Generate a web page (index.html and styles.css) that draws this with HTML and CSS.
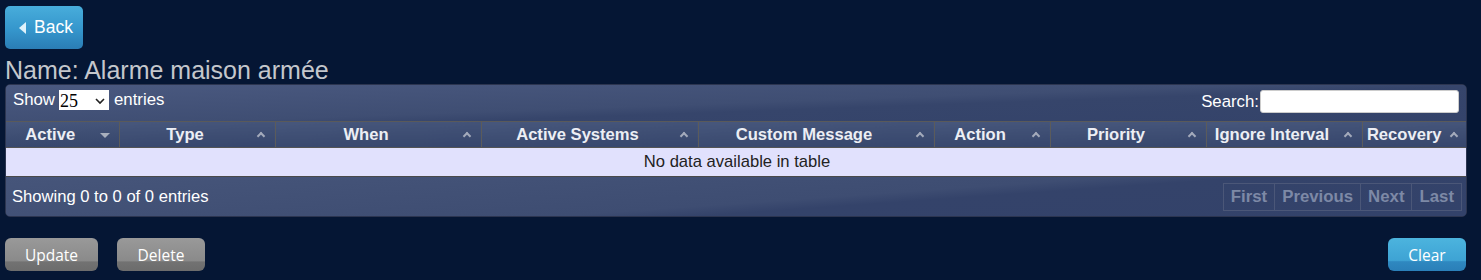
FILE: index.html
```html
<!DOCTYPE html>
<html>
<head>
<meta charset="utf-8">
<link rel="stylesheet" href="styles.css">
</head>
<body>
<div class="page">
  <button class="btn-back"><svg class="tri" width="8" height="12" viewBox="0 0 8 12"><path d="M7 0 L0 6 L7 12 Z" fill="#dff2fb"/></svg>Back</button>
  <h1 class="title">Name: Alarme maison armée</h1>
  <div class="panel">
    <div class="toolbar">
      <label class="show">Show <span class="select">25<svg width="10" height="7" viewBox="0 0 10 7"><path d="M1 1 L5 5 L9 1" fill="none" stroke="#222" stroke-width="1.6"/></svg></span> entries</label>
      <label class="search">Search:<span class="input"></span></label>
    </div>
    <table class="grid">
      <colgroup>
        <col style="width:113px"><col style="width:156px"><col style="width:206px"><col style="width:217px"><col style="width:236px"><col style="width:116px"><col style="width:156px"><col style="width:156px"><col style="width:106px">
      </colgroup>
      <thead>
        <tr>
          <th><span>Active</span><i class="sort down"></i></th>
          <th><span>Type</span><i class="sort"></i></th>
          <th><span>When</span><i class="sort"></i></th>
          <th><span>Active Systems</span><i class="sort"></i></th>
          <th><span>Custom Message</span><i class="sort"></i></th>
          <th><span>Action</span><i class="sort"></i></th>
          <th><span>Priority</span><i class="sort"></i></th>
          <th><span>Ignore Interval</span><i class="sort"></i></th>
          <th><span>Recovery</span><i class="sort"></i></th>
        </tr>
      </thead>
      <tbody>
        <tr><td colspan="9">No data available in table</td></tr>
      </tbody>
    </table>
    <div class="footer">
      <span class="info">Showing 0 to 0 of 0 entries</span>
      <div class="pager"><span>First</span><span>Previous</span><span>Next</span><span>Last</span></div>
    </div>
  </div>
  <div class="actions">
    <div class="left">
      <button class="btn grey">Update</button>
      <button class="btn grey">Delete</button>
    </div>
    <button class="btn blue">Clear</button>
  </div>
</div>
</body>
</html>
```

FILE: styles.css
```css
html, body {
  margin: 0;
  padding: 0;
  background: #051634;
  font-family: "Liberation Sans", Arial, sans-serif;
}
.page {
  padding: 6px 14px 0 5px;
  width: 1462px;
}
.btn-back {
  display: flex;
  align-items: center;
  gap: 7px;
  width: 78px;
  height: 43px;
  padding: 0 0 0 14px;
  border: none;
  border-radius: 5px;
  background: linear-gradient(#48addb, #3596cc 55%, #2a7db5);
  color: #fff;
  font-family: "Liberation Sans", Arial, sans-serif;
  font-size: 17.5px;
}
.tri { margin-top: 1px; }
.title {
  margin: 7px 0 0 0;
  height: 28px;
  font-size: 25px;
  font-weight: normal;
  color: #c4c7cc;
  line-height: 28px;
  white-space: nowrap;
}
.panel {
  margin-top: 0;
  border: 1px solid #2c3550;
  border-radius: 5px;
  overflow: hidden;
  background: linear-gradient(175deg, #46557a 0%, #3d4c71 45%, #33426a 55%, #304066 100%);
}
.toolbar {
  height: 36px;
  display: flex;
  justify-content: space-between;
  align-items: flex-start;
  padding: 0 7px;
  color: #fff;
  font-size: 16.8px;
  background: linear-gradient(178deg, #4a5980 0%, #3f4e73 50%, #36456b 60%, #34436a 100%);
  border-bottom: 1px solid #5a5a5a;
}
.show {
  display: flex;
  align-items: center;
  margin-top: 5px;
}
.select {
  display: inline-flex;
  align-items: center;
  justify-content: space-between;
  width: 50px;
  height: 20px;
  margin: 0 5px 0 4px;
  padding: 2px 4px 0 1px;
  box-sizing: border-box;
  background: #fff;
  color: #000;
  font-family: "Liberation Serif", "Times New Roman", serif;
  font-size: 18px;
  line-height: 22px;
}
.search {
  display: flex;
  align-items: center;
  margin-top: 5px;
}
.input {
  display: inline-block;
  width: 199px;
  height: 23px;
  box-sizing: border-box;
  background: #fff;
  border: 1px solid #ccc;
  border-radius: 3px;
  margin-left: 1px;
}
.grid {
  width: 1462px;
  border-collapse: collapse;
  table-layout: fixed;
}
.grid th {
  height: 25px;
  padding: 0 26px 0 2px;
  position: relative;
  color: #eceef4;
  font-size: 16.6px;
  font-weight: bold;
  text-align: center;
  white-space: nowrap;
  background: linear-gradient(178deg, #47577c 0%, #3e4e73 50%, #36466c 100%);
  border-right: 1px solid #5b5b5b;
  border-bottom: 1px solid #555;
}
.grid th:last-child { border-right: none; padding-right: 22px; padding-left: 0; }
.sort {
  position: absolute;
  right: 11px;
  top: 11px;
  width: 4px;
  height: 4px;
  border-left: 2px solid #a3aabb;
  border-top: 2px solid #a3aabb;
  transform: rotate(45deg);
}
.sort.down {
  border: none;
  width: 0;
  height: 0;
  top: 11px;
  right: 9px;
  transform: none;
  border-left: 5px solid transparent;
  border-right: 5px solid transparent;
  border-top: 5px solid #a8afbd;
}
.grid td {
  height: 28px;
  padding: 0;
  text-align: center;
  background: #e1e1fd;
  color: #222;
  font-size: 16.6px;
  border-bottom: 1px solid #4a4a4a;
}
.footer {
  height: 39px;
  display: flex;
  justify-content: space-between;
  align-items: center;
  padding: 0 4px 0 6px;
  color: #fff;
  font-size: 16.6px;
  background: linear-gradient(176deg, #46557a 0%, #3e4d72 55%, #34436a 62%, #33426a 100%);
}
.info { margin-top: 0; }
.pager {
  display: flex;
  margin-top: 1px;
}
.pager span {
  display: inline-block;
  height: 26px;
  line-height: 26px;
  padding: 0 7px;
  border: 1px solid #4b5778;
  margin-left: -1px;
  color: #7d89a6;
  font-weight: bold;
  font-size: 16.8px;
}
.actions {
  display: flex;
  justify-content: space-between;
  margin-top: 21px;
}
.left {
  display: flex;
  gap: 19px;
}
.btn {
  height: 33px;
  border: none;
  border-radius: 6px;
  color: #fff;
  font-family: "Open Sans", "Liberation Sans", sans-serif;
  font-size: 15.5px;
  padding: 0;
}
.btn.grey {
  background: linear-gradient(#999, #8a8a8a 70%, #727272 72%, #6c6c6c);
}
.btn.grey:first-child { width: 93px; }
.btn.grey:last-child { width: 88px; }
.btn.blue {
  width: 78px;
  margin-right: 1px;
  background: linear-gradient(#4cb4de, #3ea3d4 68%, #2f88c0 72%, #2a7fb8);
}
```
